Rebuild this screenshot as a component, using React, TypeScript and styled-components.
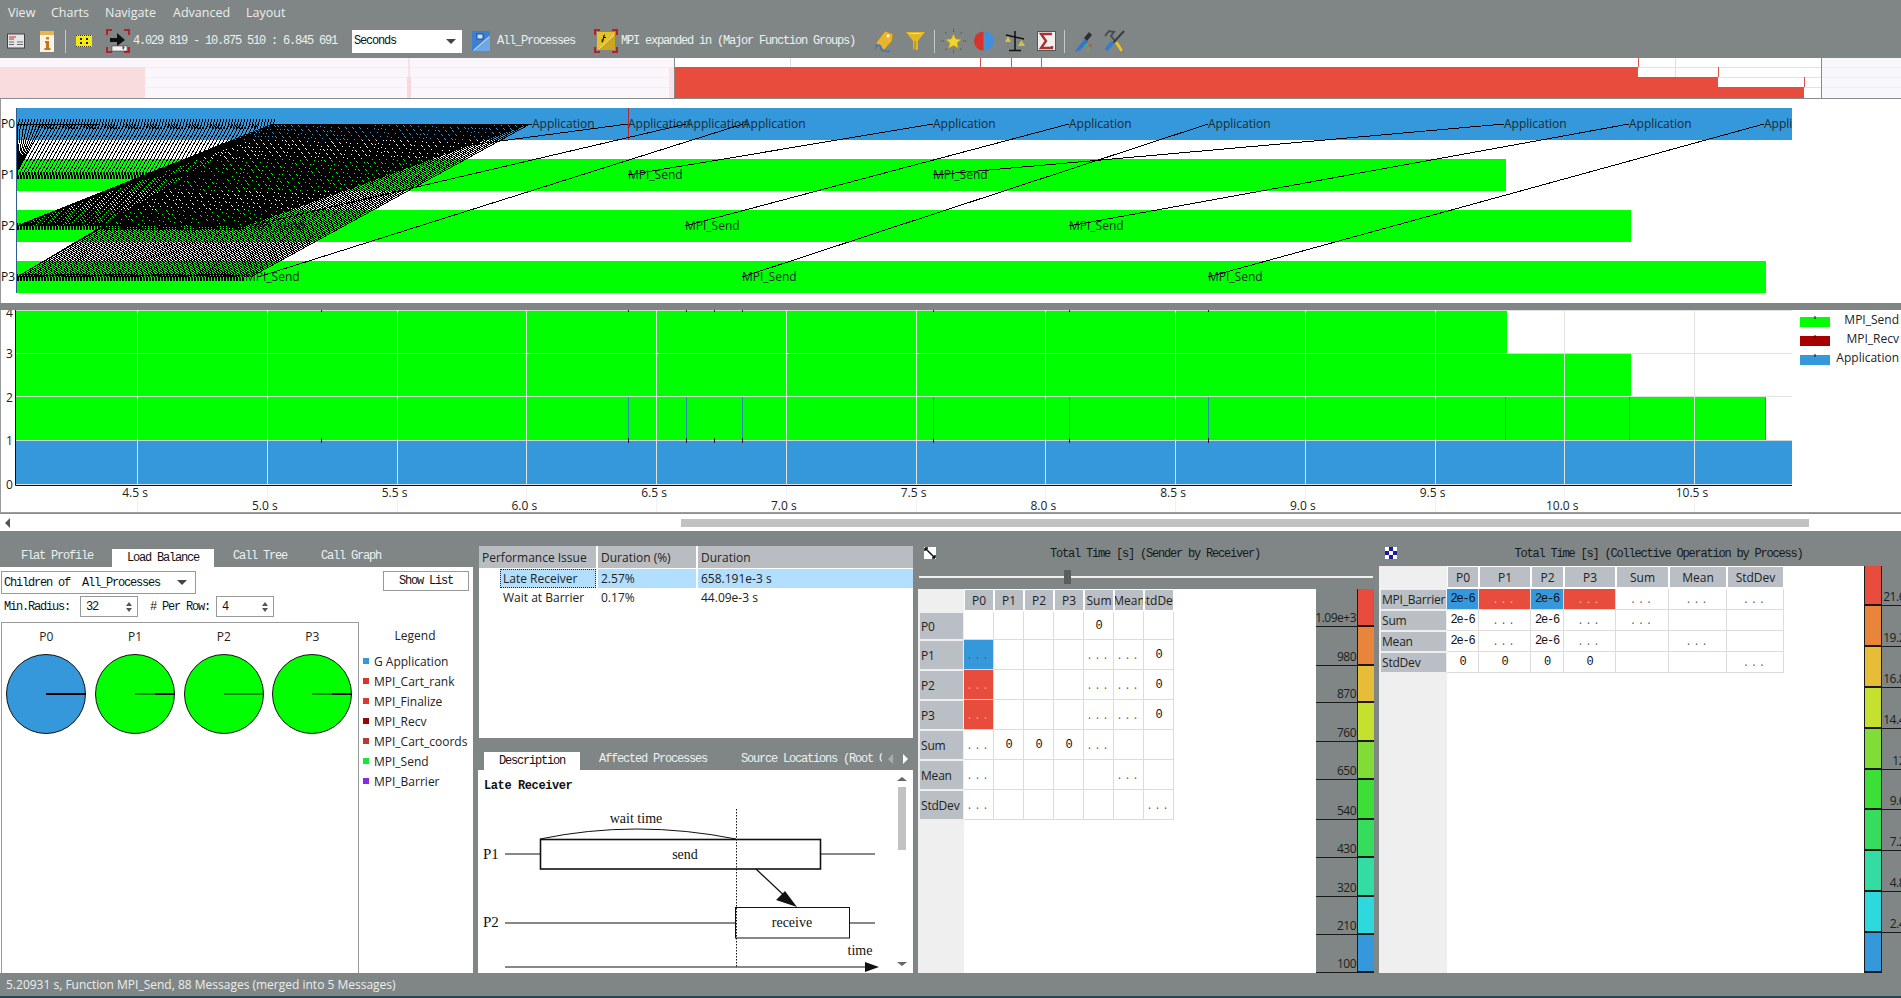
import React from "react";
import styled, { createGlobalStyle } from "styled-components";

const GRAY = "#808685";
const SANS = `"Open Sans", "Noto Sans", sans-serif`;
const MONO = `"Liberation Mono", "DejaVu Sans Mono", monospace`;
const BLUE = "#3498db";
const RED = "#e74c3c";
const GREEN = "#00ff00";

const Global = createGlobalStyle`
  html, body { margin: 0; padding: 0; background: ${GRAY}; }
  * { box-sizing: border-box; }
`;

const Page = styled.div`
  width: 1901px; height: 998px; overflow: hidden; background: ${GRAY};
  display: flex; flex-direction: column; font-family: ${SANS}; font-size: 12px; color: #222;
`;

const MenuBar = styled.div`
  height: 24px; display: flex; align-items: center; padding: 0 0 0 8px; color: #eceeee; font-size: 12.5px;
`;
const MenuItem = styled.span<{ $w: number }>`
  width: ${(p) => p.$w}px;
`;

const ToolBar = styled.div`
  height: 34px; display: flex; align-items: center;
`;
const Slot = styled.span<{ $ml: number; $w: number }>`
  display: flex; flex: none; margin-left: ${(p) => p.$ml}px; width: ${(p) => p.$w}px; height: 24px; align-items: center;
`;
const ToolSep = styled.span<{ $ml: number }>`
  flex: none; width: 1px; height: 23px; margin-left: ${(p) => p.$ml}px; background: #c4c8c8;
`;
const ToolText = styled.span<{ $ml: number }>`
  flex: none; margin-left: ${(p) => p.$ml}px; font: 12px ${MONO}; letter-spacing: -1.2px; color: #eef0f0; white-space: pre;
`;
const Combo = styled.div`
  flex: none; margin-left: 15px; width: 110px; height: 23px; background: #fff; color: #111;
  display: flex; align-items: center; justify-content: space-between; padding: 0 6px 0 2px;
  font: 12px ${MONO}; letter-spacing: -1.2px;
`;
const Caret = styled.span`
  width: 0; height: 0; border-left: 5px solid transparent; border-right: 5px solid transparent; border-top: 5px solid #444;
`;

const Strip = styled.svg<{ $h: number }>`
  display: block; flex: none; width: 1901px; height: ${(p) => p.$h}px; background: #fff;
`;
const Splitter = styled.div`
  flex: none; height: 7px; background: ${GRAY};
`;
const HScroll = styled.div`
  flex: none; height: 18px; background: #fff; display: flex; align-items: center; padding-left: 5px; border-top: 1px solid #8b8f8f;
`;
const ArrowLeft = styled.span`
  width: 0; height: 0; border-top: 5px solid transparent; border-bottom: 5px solid transparent; border-right: 5px solid #555;
`;
const HThumb = styled.span`
  margin-left: 671px; width: 1128px; height: 8px; background: #c2c2c2;
`;

const Bottom = styled.div`
  flex: none; height: 427px; margin-top: 15px; display: flex;
`;
const LeftPane = styled.div`
  flex: none; width: 473px; padding-top: 3px; display: flex; flex-direction: column;
`;
const TabRow = styled.div<{ $pl: number }>`
  flex: none; height: 18px; display: flex; padding-left: ${(p) => p.$pl}px; position: relative;
`;
const Tab = styled.div<{ $active?: boolean; $w: number; $pl: number }>`
  flex: none; width: ${(p) => p.$w}px; padding-left: ${(p) => p.$pl}px; height: 18px; overflow: hidden; white-space: pre;
  font: 12px/${(p) => (p.$active ? 19 : 15)}px ${MONO}; letter-spacing: -1.2px;
  background: ${(p) => (p.$active ? "#fff" : "transparent")};
  color: ${(p) => (p.$active ? "#111" : "#eef0f0")};
`;
const LeftBody = styled.div`
  flex: 1; background: #fff; display: flex; flex-direction: column; min-height: 0;
`;
const SelectRow = styled.div`
  display: flex; justify-content: space-between; align-items: flex-start; padding: 4px 4px 0 1px; height: 29px;
`;
const Select = styled.div`
  width: 195px; height: 23px; border: 1px solid #999; display: flex; align-items: center; justify-content: space-between;
  padding: 0 8px 0 2px; font: 12px ${MONO}; letter-spacing: -1.2px; white-space: pre; color: #111;
`;
const Button = styled.div`
  width: 86px; height: 20px; border: 1px solid #999; display: flex; align-items: center; justify-content: center;
  font: 12px ${MONO}; letter-spacing: -1.2px; white-space: pre; color: #111;
`;
const SpinRow = styled.div`
  height: 21px; display: flex; align-items: center; padding-left: 4px; font: 12px ${MONO}; letter-spacing: -1.2px; color: #111;
`;
const SpinLabel = styled.span<{ $w: number }>`
  width: ${(p) => p.$w}px; white-space: pre;
`;
const Spin = styled.div`
  width: 58px; height: 21px; border: 1px solid #999; display: flex; align-items: center; justify-content: space-between; padding: 0 5px;
`;
const SpinArrows = styled.span`
  display: flex; flex-direction: column; gap: 2px;
`;
const Tri = styled.span<{ $down?: boolean }>`
  display: block; width: 0; height: 0; border-left: 3.5px solid transparent; border-right: 3.5px solid transparent;
  ${(p) => (p.$down ? "border-top: 4px solid #555;" : "border-bottom: 4px solid #555;")}
`;
const RailTri = styled.span<{ $down?: boolean }>`
  display: block; width: 0; height: 0; border-left: 5px solid transparent; border-right: 5px solid transparent;
  ${(p) => (p.$down ? "border-top: 4px solid #666;" : "border-bottom: 4px solid #666;")}
`;
const PieRow = styled.div`
  flex: 1; margin-top: 5px; display: flex; min-height: 0;
`;
const PieBox = styled.div`
  margin-left: 1px; width: 358px; border: 1px solid #999; border-bottom: none; display: flex; align-items: flex-start; padding-left: 0;
`;
const PieCol = styled.div`
  width: 88.7px; display: flex; flex-direction: column; align-items: center;
`;
const PieLabel = styled.div`
  height: 16px; margin-top: 6px; line-height: 16px; font-size: 12px;
`;
const PieSvg = styled.svg`
  margin-top: 8px; width: 82px; height: 82px; display: block;
`;
const Legend = styled.div`
  flex: 1; padding: 5px 0 0 4px; display: flex; flex-direction: column;
`;
const LegendTitle = styled.div`
  text-align: center; height: 24px; line-height: 18px; padding-right: 6px; font-size: 12px; margin-bottom: 0;
`;
const LegendItem = styled.div`
  height: 20px; display: flex; align-items: center; gap: 5px; font-size: 12px; white-space: nowrap;
`;
const LegendDot = styled.span<{ $c: string }>`
  width: 6px; height: 6px; background: ${(p) => p.$c};
`;

const MidPane = styled.div`
  flex: none; width: 435px; margin-left: 5px; display: flex; flex-direction: column;
`;
const IssueTable = styled.div`
  flex: none; height: 192px; margin-left: 1px; background: #fff; display: grid;
  grid-template-columns: 117px 2px 98px 2px 215px; grid-auto-rows: min-content; align-content: start;
`;
const IssueHead = styled.div`
  height: 22px; background: #b9bdc1; padding: 0 3px; line-height: 23px; margin-bottom: 1px;
`;
const Gut = styled.div<{ $h: number; $mb?: number }>`
  height: ${(p) => p.$h}px; margin-bottom: ${(p) => p.$mb ?? 0}px;
`;
const IssueName = styled.div`
  height: 19px; padding-left: 21px; display: flex;
`;
const Focus = styled.span<{ $on?: boolean }>`
  flex: 1; padding-left: 3px; line-height: 20px;
  ${(p) => p.$on && "background:#b3dfff; outline:1px dotted #223; outline-offset:-1px;"}
`;
const IssueCell = styled.div<{ $on?: boolean }>`
  height: 19px; line-height: 20px; padding-left: 3px; ${(p) => p.$on && "background:#b3dfff;"}
`;
const MidTabs = styled.div`
  flex: none; margin-top: 14px; height: 18px; display: flex; padding-left: 6px; position: relative;
`;
const TabArrows = styled.div`
  flex: none; width: 34px; display: flex; align-items: center; gap: 10px; padding: 0 0 4px 6px;
`;
const ArrowSmall = styled.span<{ $faded?: boolean; $right?: boolean }>`
  width: 0; height: 0; border-top: 5px solid transparent; border-bottom: 5px solid transparent;
  ${(p) => (p.$right ? "border-left: 5px solid #fff;" : `border-right: 5px solid ${p.$faded ? "#a8acac" : "#fff"};`)}
`;
const DescBody = styled.div`
  flex: none; height: 203px; background: #fff; display: flex; overflow: hidden;
`;
const DescContent = styled.div`
  width: 416px; flex: none; display: flex; flex-direction: column;
`;
const DescTitle = styled.div`
  height: 20px; padding: 9px 0 0 6px; font: bold 12px/14px ${MONO}; letter-spacing: -0.4px; color: #111; flex: none; white-space: pre;
`;
const DescSvg = styled.svg`
  width: 416px; height: 183px; display: block; flex: none;
`;
const Rail = styled.div`
  width: 16px; display: flex; flex-direction: column; align-items: center; padding: 7px 0 7px;
`;
const RailThumb = styled.div`
  width: 8px; height: 63px; background: #c2c2c2; margin-top: 6px;
`;
const RailDown = styled.div`
  margin-top: auto;
`;

const MatrixPane = styled.div<{ $w: number }>`
  flex: none; width: ${(p) => p.$w}px; margin-left: 5px; display: flex; flex-direction: column;
`;
const MatrixTitle = styled.div<{ $pl: number }>`
  flex: none; height: 20px; display: flex; padding: 1px 0 0 6px;
  > div { flex: 1; padding-left: ${(p) => p.$pl}px; text-align: center; font: 12px/14px ${MONO}; letter-spacing: -1.2px; color: #15191a; white-space: pre; }
`;
const SliderWrap = styled.div`
  flex: none; height: 23px; position: relative; padding: 10px 1px 0;
`;
const Track = styled.div`
  height: 2px; background: #f0f0f0;
`;
const Thumb = styled.div`
  position: absolute; left: 146px; top: 4px; width: 7px; height: 14px; background: #5a5e5f;
`;
const MatrixBody = styled.div`
  flex: 1; display: flex; min-height: 0; overflow: hidden;
`;
const Table = styled.div<{ $w: number; $hw: number; $cols: string; $rows: string }>`
  flex: none; width: ${(p) => p.$w}px; background: linear-gradient(to right, #efefef ${(p) => p.$hw}px, #fff ${(p) => p.$hw}px);
  display: grid; grid-template-columns: ${(p) => p.$cols}; grid-template-rows: ${(p) => p.$rows}; align-content: start; padding-top: 1px;
`;
const Corner = styled.div``;
const ColHead = styled.div`
  background: #b9bfc4; margin: 0 1px 2px; display: flex; justify-content: center; align-items: center; overflow: hidden; white-space: nowrap;
`;
const RowHead = styled.div`
  background: #b9bfc4; margin: 1px 1px 1px 2px; display: flex; align-items: center; padding-left: 1px; letter-spacing: -0.2px; white-space: nowrap; overflow: hidden;
`;
const Cell = styled.div<{ $bg?: string }>`
  background: ${(p) => p.$bg ?? "#fff"}; border-right: 1px solid #dcdcdc; border-bottom: 1px solid #dcdcdc;
  display: flex; align-items: center; justify-content: center; font: 12px ${MONO}; letter-spacing: -1.2px; color: ${(p) => (p.$bg === RED ? "#c44" : "#111")};
`;
const Dots = styled.span<{ $light?: boolean }>`
  font: 10px ${MONO}; letter-spacing: 2px; color: ${(p) => (p.$light ? "#f2c0b8" : "#555")}; padding-top: 3px;
`;
const Scale = styled.div`
  flex: none; display: flex; flex-direction: column; overflow: hidden;
`;
const ScaleRow = styled.div<{ $h: number; $cols: string }>`
  flex: none; height: ${(p) => p.$h}px; display: grid; grid-template-columns: ${(p) => p.$cols};
`;
const ScaleText = styled.div<{ $line: boolean }>`
  display: flex; align-items: flex-end; justify-content: flex-end; padding: 0 1px 0 0; line-height: 16px; font-size: 12px; letter-spacing: -0.5px; color: #1b1f20;
  white-space: nowrap; ${(p) => p.$line && "border-bottom: 1px solid #1a1a1a;"}
`;
const Swatch = styled.div<{ $c: string }>`
  background: ${(p) => p.$c}; border: 1px solid #1a1a1a; border-width: 0 1px 2px 1px;
`;

const StatusBar = styled.div`
  flex: 1; padding: 0 0 0 6px; display: flex; align-items: center; color: #eceeee; font-size: 12px; border-bottom: 2px solid #24475c;
`;

/* ---------- icons ---------- */
const I = styled.svg<{ $w: number; $h: number }>`
  display: block; width: ${(p) => p.$w}px; height: ${(p) => p.$h}px;
`;
const Brackets = ({ w = 24 }: { w?: number }) => (
  <path d={`M1 6V1H6M${w - 6} 1H${w - 1}V6M1 ${w - 6}V${w - 1}H6M${w - 6} ${w - 1}H${w - 1}V${w - 6}`} fill="none" stroke="#b3202c" strokeWidth="2" />
);
const IconDoc = () => (
  <I $w={18} $h={24} viewBox="0 0 18 24">
    <rect x="0.5" y="5" width="17" height="14" fill="#e6e6e6" stroke="#444" />
    <path d="M2 8h7M2 10h5" stroke="#b33" />
    <path d="M2 13h5M10 13h6M2 15.500h5M10 15.500h6" stroke="#667" />
  </I>
);
const IconInfo = () => (
  <I $w={16} $h={24} viewBox="0 0 16 24">
    <rect x="1" y="2" width="14" height="21" fill="#f8f4e8" />
    <rect x="1" y="2" width="14" height="4" fill="#eab64c" />
    <rect x="7" y="8" width="3" height="2.500" fill="#e07a18" />
    <path d="M6 12h4v7h1.500v2h-6v-2H7v-5H6z" fill="#c9701a" />
  </I>
);
const IconRuler = () => (
  <I $w={16} $h={24} viewBox="0 0 16 24">
    <rect x="0" y="6" width="16" height="12" fill="#f5e90f" />
    <path d="M0 6.500h16M0 17.500h16" stroke="#333" strokeDasharray="1 1" />
    <path d="M5 9v2M11 9v2M5 13v2M11 13v2" stroke="#222" strokeWidth="2" />
  </I>
);
const IconZoom = () => (
  <I $w={24} $h={24} viewBox="0 0 24 24">
    <Brackets />
    <path d="M4 9h7V4l8 7-8 6v-4H4z" fill="#111" />
    <rect x="6" y="17" width="15" height="5" fill="#f2f2f2" stroke="#333" strokeWidth=".5" />
    <path d="M16 18h2v1h-1v1h1" stroke="#222" fill="none" strokeWidth=".8" />
  </I>
);
const IconProc = () => (
  <I $w={18} $h={24} viewBox="0 0 18 24">
    <rect x="0" y="2" width="18" height="20" fill="#3d7fd0" />
    <path d="M0 22L18 6v16z" fill="#6fa7e6" />
    <path d="M2 21L17 8" stroke="#d8e4f2" strokeWidth="1" />
    <rect x="5" y="5" width="6" height="5" fill="#cfe0f5" stroke="#1c4f96" />
  </I>
);
const IconFunc = () => (
  <I $w={24} $h={24} viewBox="0 0 24 24">
    <rect x="3" y="3" width="18" height="18" fill="#e1c22a" />
    <path d="M3 21L21 5v16z" fill="#cca61c" />
    <path d="M5 20L20 6" stroke="#f4e9a0" />
    <path d="M11 6c-2 0-1 3-2 5H7.500M9 8.500h3M9 11c0 2-1 2-1.500 2" stroke="#111" fill="none" strokeWidth="1.200" />
    <Brackets />
  </I>
);
const IconTag = () => (
  <I $w={18} $h={24} viewBox="0 0 18 24">
    <path d="M1 14L10 2l8 3-1 7-8 9z" fill="#eab52e" stroke="#a8791a" strokeWidth=".6" />
    <circle cx="13" cy="7" r="1.400" fill="#fff" />
    <path d="M0 21c0-6 6-6 6-2 0 3 4 4 9 3" fill="none" stroke="#3f7bb8" strokeWidth="1.800" />
  </I>
);
const IconFunnel = () => (
  <I $w={19} $h={24} viewBox="0 0 19 24">
    <path d="M0 3h19l-7 9v9l-5-1v-8z" fill="#e4b820" />
    <path d="M2 4h15l-4 1H5z" fill="#f8e58a" />
    <path d="M8 12v8l2-0v-8z" fill="#c8981a" />
  </I>
);
const IconStar = () => (
  <I $w={25} $h={24} viewBox="0 0 25 24">
    <path d="M12.500 5l2.300 4.900 5.400.5-4 3.600 1.200 5.300-4.900-2.700-4.900 2.700 1.200-5.300-4-3.600 5.400-.5z" fill="#f2d52c" stroke="#b8971a" strokeWidth=".6" />
    <path d="M12.500 0v3M4 3l2 2M21 3l-2 2M0 12h3M22 12h3M4 21l2-2M21 21l-2-2M12.500 21v3" stroke="#45484a" strokeDasharray="1 1" />
  </I>
);
const IconHalf = () => (
  <I $w={20} $h={24} viewBox="0 0 20 24">
    <path d="M9.500 2.500a9.500 9.500 0 0 0 0 19z" fill="#d5332b" />
    <path d="M10.500 2.500a9.500 9.500 0 0 1 0 19z" fill="#3f8fe0" />
  </I>
);
const IconBalance = () => (
  <I $w={20} $h={24} viewBox="0 0 20 24">
    <path d="M10 2v19M4 21.500h12M1 6l18 4" stroke="#111" strokeWidth="1.500" fill="none" />
    <path d="M0 13h6L3 7zM13 17h7l-3.500-6z" fill="#d6c04a" />
  </I>
);
const IconSigma = () => (
  <I $w={19} $h={24} viewBox="0 0 19 24">
    <rect x="0.500" y="2.500" width="18" height="19" fill="#f2f0ee" stroke="#555" />
    <path d="M15 5H4l5 7-5 7h11v-2" fill="none" stroke="#a83232" strokeWidth="2.400" />
  </I>
);
const IconDropper = () => (
  <I $w={20} $h={24} viewBox="0 0 20 24">
    <path d="M1 23l3-5 7-8 3 3-8 8z" fill="#2f78cf" />
    <path d="M10 9l5-6 3 3-5 6z" fill="#2b2f33" />
    <rect x="11" y="15" width="3" height="3" fill="#4cae60" />
    <rect x="15" y="15" width="3" height="3" fill="#c05a4a" />
    <rect x="13" y="19" width="3" height="3" fill="#6fa060" />
  </I>
);
const IconTools = () => (
  <I $w={22} $h={24} viewBox="0 0 22 24">
    <path d="M2 7l4-5 5 1-3 4 12 15" fill="none" stroke="#4a4e52" strokeWidth="2" />
    <path d="M13 13l6 9" stroke="#e4c72a" strokeWidth="3" />
    <path d="M21 2L10 14" stroke="#3a3e42" strokeWidth="2" />
    <path d="M10 13L3 21" stroke="#2f7ed0" strokeWidth="4" />
  </I>
);

/* ---------- data ---------- */
const X = (t: number) => 137 + (t - 4.5) * 259.5;
const ticks = [4.5, 5, 5.5, 6, 6.5, 7, 7.5, 8, 8.5, 9, 9.5, 10, 10.5];
const ROW = { p0: [108, 124], p1: [159, 175], p2: [210, 226], p3: [261, 277] } as const;
const appX = [532, 628, 686, 743, 933, 1069, 1208, 1504, 1629, 1764];
const sends: [number, number][] = [
  [628, 175], [933, 175], [250, 226], [685, 226], [1069, 226], [245, 277], [742, 277], [1208, 277],
];
const longMsgs = [
  [245, 175, 628], [250, 226, 686], [258, 277, 743], [628, 175, 933], [685, 226, 1069], [742, 277, 1208],
  [933, 175, 1504], [1069, 226, 1629], [1208, 277, 1764],
];
function bundle(): string {
  let d = "";
  for (let i = 0; i < 62; i++) {
    const s = 17 + i * 3.5;
    d += `M${s.toFixed(1)} 172L${(s + 27).toFixed(1)} 124`;
  }
  for (let i = 0; i < 8; i++) d += `M17 172L${17 + i * 3.4} 124`;
  for (let i = 0; i < 74; i++) {
    const s = 17 + Math.max(0, i - 6) * 3.4;
    d += `M${s.toFixed(1)} 226L${(273 + i * 3.5).toFixed(1)} 124`;
  }
  for (let i = 0; i < 76; i++) {
    const s = 17 + Math.max(0, i - 2) * 3.2;
    d += `M${s.toFixed(1)} 277L${(275 + i * 3.4).toFixed(1)} 124`;
  }
  return d;
}
function hatch(): string {
  let d = "";
  for (let x = 17; x < 275; x += 3) d += `M${x} 129L${x + 3} 119`;
  d += "M17 124H100M275 124H532";
  for (const [y, end] of [[175, 232], [226, 245], [277, 245]]) {
    for (let x = 17; x < end; x += 3) d += `M${x} ${y + 4}V${y - 3}L${x + 1.5} ${y + 2}L${x + 3} ${y - 3}`;
  }
  return d;
}

const legendItems: [string, string][] = [
  ["G Application", BLUE], ["MPI_Cart_rank", "#d6352b"], ["MPI_Finalize", "#d63b33"], ["MPI_Recv", "#8f0a0a"],
  ["MPI_Cart_coords", "#b83a33"], ["MPI_Send", "#15e63a"], ["MPI_Barrier", "#8a2be2"],
];
const pies = [
  { n: "P0", c: BLUE, thick: 40 },
  { n: "P1", c: GREEN, thick: 20 },
  { n: "P2", c: GREEN, thick: 0 },
  { n: "P3", c: GREEN, thick: 20 },
];
const SCALE_COLORS = ["#e74c3c", "#e8853b", "#e7bd38", "#c6e030", "#82dc38", "#3ede38", "#36dd5c", "#32dca2", "#2dd9dc", "#3498db"];
const scale1: [number, string][] = [[38, "1.09e+3"], [39, "980"], [37, "870"], [39, "760"], [38, "650"], [40, "540"], [38, "430"], [39, "320"], [38, "210"], [38, "100"]];
const scale2: [number, string][] = [[40, "21.6"], [41, "19.2"], [41, "16.8"], [41, "14.4"], [41, "12"], [40, "9.6"], [41, "7.2"], [41, "4.8"], [41, "2.4"], [40, ""]];

const M1_COLS = ["P0", "P1", "P2", "P3", "Sum", "Mean", "StdDev"];
const dd = "...";
const M1_ROWS: [string, string[]][] = [
  ["P0", ["", "", "", "", "0", "", ""]],
  ["P1", ["b", "", "", "", dd, dd, "0"]],
  ["P2", ["r", "", "", "", dd, dd, "0"]],
  ["P3", ["r", "", "", "", dd, dd, "0"]],
  ["Sum", [dd, "0", "0", "0", dd, "", ""]],
  ["Mean", [dd, "", "", "", "", dd, ""]],
  ["StdDev", [dd, "", "", "", "", "", dd]],
];
const M2_ROWS: [string, string[]][] = [
  ["MPI_Barrier", ["B2e-6", "r", "B2e-6", "r", dd, dd, dd]],
  ["Sum", ["2e-6", dd, "2e-6", dd, dd, "", ""]],
  ["Mean", ["2e-6", dd, "2e-6", dd, "", dd, ""]],
  ["StdDev", ["0", "0", "0", "0", "", "", dd]],
];

const MCell = ({ v }: { v: string }) => {
  if (v === "b") return <Cell $bg={BLUE}><Dots>{dd}</Dots></Cell>;
  if (v === "r") return <Cell $bg={RED}><Dots $light>{dd}</Dots></Cell>;
  if (v === dd) return <Cell><Dots>{dd}</Dots></Cell>;
  if (v.startsWith("B")) return <Cell $bg={BLUE}>{v.slice(1)}</Cell>;
  return <Cell>{v}</Cell>;
};

const ScaleBar = ({ rows, barFirst }: { rows: [number, string][]; barFirst?: boolean }) => (
  <Scale>
    {rows.map(([h, l], i) => (
      <ScaleRow key={i} $h={h} $cols={barFirst ? "18px 24px" : "41px 18px"}>
        {barFirst && <Swatch $c={SCALE_COLORS[i]} />}
        <ScaleText $line={i < rows.length - (barFirst ? 1 : 0)}>{l}</ScaleText>
        {!barFirst && <Swatch $c={SCALE_COLORS[i]} />}
      </ScaleRow>
    ))}
  </Scale>
);

const Overview = () => (
  <Strip $h={41} viewBox="0 58 1901 41">
    <rect x="0" y="58" width="674" height="41" fill="#fbf6fb" />
    <rect x="1821" y="58" width="80" height="41" fill="#f8f7fc" />
    <path d="M0 67.500H674M0 77.500H674M0 87.500H674M1822 67.500H1901M1822 77.500H1901M1822 87.500H1901" stroke="#f3eef4" />
    <path d="M675 67.500H1821M675 77.500H1821M675 87.500H1821" stroke="#e2e2e2" />
    <path d="M790.500 58V67M1675.500 58V77" stroke="#dedede" />
    <rect x="0" y="67" width="145" height="31" fill="#f8dcde" />
    <rect x="408" y="58" width="2" height="40" fill="#f7e3e6" />
    <rect x="407" y="77" width="4" height="21" fill="#f6d9dc" />
    <rect x="669" y="67" width="5" height="31" fill="#f9e4e7" />
    <path d="M675 98V67H1638V77H1718V87H1804V98z" fill={RED} />
    <path d="M980.500 58V67M1011.500 58V67M1041.500 58V67M1638.500 58V67M1718.500 67V77M1804.500 77V87" stroke="#d8524a" />
    <path d="M674.500 58V98M1821.500 58V98" stroke="#888" />
    <path d="M0 98.500H1901" stroke="#8a8d8d" />
  </Strip>
);

const Timeline = () => (
  <Strip $h={204} viewBox="0 99 1901 204">
    <path d="M0.500 99V303" stroke="#999" />
    <rect x="16" y="108" width="1776" height="32" fill={BLUE} />
    <rect x="16" y="159" width="1490" height="32" fill={GREEN} />
    <rect x="16" y="210" width="1615" height="32" fill={GREEN} />
    <rect x="16" y="261" width="1750" height="32" fill={GREEN} />
    <path d="M16.500 108V293" stroke="#2c5f8f" />
    <path d="M628.500 108V140" stroke="#b02a30" />
    <clipPath id="tlclip"><rect x="16" y="99" width="1776" height="204" /></clipPath>
    <g clipPath="url(#tlclip)" fontFamily={SANS} fontSize="12" fill="#1b2a33">
      {appX.map((x) => <text key={x} x={x} y={128}>Application</text>)}
      {sends.map(([x, y]) => <text key={x} x={x} y={y + 4}>MPI_Send</text>)}
    </g>
    <g fontFamily={SANS} fontSize="12" fill="#111">
      {Object.entries(ROW).map(([k, v]) => <text key={k} x="1" y={v[1] + 4}>{k.toUpperCase()}</text>)}
    </g>
    <g shapeRendering="crispEdges" fill="none" stroke="#000">
      <path d={bundle()} />
      <path d={hatch()} />
      {longMsgs.map(([a, y, b], i) => <line key={i} x1={a} y1={y} x2={b} y2={124} />)}
    </g>
  </Strip>
);

const Chart = () => (
  <Strip $h={203} viewBox="0 310 1901 203">
    <rect x="16" y="310" width="1491" height="43" fill={GREEN} />
    <rect x="16" y="353" width="1615" height="44" fill={GREEN} />
    <rect x="16" y="397" width="1750" height="43" fill={GREEN} />
    <rect x="16" y="440" width="1776" height="44" fill={BLUE} />
    <path d="M16 310.500H1792M16 353.500H1792M16 396.500H1792M16 440.500H1792M16 484.500H1792" stroke="#dedede" strokeOpacity=".9" />
    {ticks.map((t) => <path key={t} d={`M${Math.round(X(t)) + 0.5} 310V484`} stroke="#dfe4df" />)}
    {ticks.map((t) => <path key={t} d={`M${Math.round(X(t)) + 0.5} 486V513`} stroke="#f1f1f1" />)}
    {[628, 686, 742, 933, 1069, 1208, 1505, 1629, 1765].map((x) => <path key={x} d={`M${x}.5 397V440`} stroke="#2a8fb0" />)}
    {[321, 628, 686, 714, 742, 933, 1069, 1208].map((x) => <path key={x} d={`M${x}.5 310V312M${x}.5 438V443`} stroke="#222" />)}
    <path d="M15.500 310V485.500H1792" fill="none" stroke="#111" />
    <g fontFamily={SANS} fontSize="12" fill="#222">
      {[["4", 317], ["3", 358], ["2", 402], ["1", 445], ["0", 489]].map(([l, y]) => <text key={l} x="6" y={y}>{l}</text>)}
      {ticks.map((t, i) => (
        <text key={t} x={X(t) - 2} y={i % 2 ? 510 : 497} textAnchor="middle">{t.toFixed(1)} s</text>
      ))}
      <rect x="1800" y="317" width="30" height="10" fill={GREEN} />
      <rect x="1800" y="336" width="30" height="10" fill="#a80000" />
      <rect x="1800" y="355" width="30" height="10" fill={BLUE} />
      <path d="M1815 316v3M1815 335v3M1815 354v3" stroke="#111" />
      <text x="1899" y="324" textAnchor="end">MPI_Send</text>
      <text x="1899" y="343" textAnchor="end">MPI_Recv</text>
      <text x="1899" y="362" textAnchor="end">Application</text>
    </g>
    <path d="M0.500 310V513M0 512.500H1901" stroke="#9a9d9d" fill="none" />
  </Strip>
);

const Diagram = () => (
  <DescSvg viewBox="478 790 416 183">
    <g fontFamily={`"Liberation Serif", serif`} fontSize="14" fill="#111">
      <text x="483" y="859" fontSize="15">P1</text>
      <text x="483" y="927" fontSize="15">P2</text>
      <text x="636" y="823" textAnchor="middle">wait time</text>
      <text x="685" y="859" textAnchor="middle">send</text>
      <text x="792" y="927" textAnchor="middle">receive</text>
      <text x="860" y="955" textAnchor="middle">time</text>
    </g>
    <g fill="none" stroke="#111">
      <path d="M505 854H540M821 854H875M505 923H735M849 923H875" />
      <rect x="540.500" y="839.500" width="280" height="29.500" strokeWidth="1.600" />
      <rect x="735.500" y="907.500" width="114" height="30.500" />
      <path d="M540 839Q636 819 736 839" />
      <path d="M736.500 809V967" strokeDasharray="1.500 1.500" />
      <path d="M505 967H865" />
      <path d="M756 869L790 901" strokeWidth="1.300" />
    </g>
    <path d="M865 962L879 967L865 972zM776 900L797 907L785 891z" fill="#111" />
  </DescSvg>
);

export default function App() {
  return (
    <Page>
      <Global />
      <MenuBar>
        <MenuItem $w={43}>View</MenuItem>
        <MenuItem $w={54}>Charts</MenuItem>
        <MenuItem $w={68}>Navigate</MenuItem>
        <MenuItem $w={73}>Advanced</MenuItem>
        <MenuItem $w={50}>Layout</MenuItem>
      </MenuBar>
      <ToolBar>
        <Slot $ml={7} $w={18}><IconDoc /></Slot>
        <Slot $ml={14} $w={16}><IconInfo /></Slot>
        <ToolSep $ml={10} />
        <Slot $ml={10} $w={16}><IconRuler /></Slot>
        <Slot $ml={14} $w={24}><IconZoom /></Slot>
        <ToolText $ml={3}>4.029 819 - 10.875 510 : 6.845 691</ToolText>
        <Combo>Seconds<Caret /></Combo>
        <Slot $ml={10} $w={18}><IconProc /></Slot>
        <ToolText $ml={7}>All_Processes</ToolText>
        <Slot $ml={19} $w={24}><IconFunc /></Slot>
        <ToolText $ml={3}>MPI expanded in (Major Function Groups)</ToolText>
        <Slot $ml={20} $w={18}><IconTag /></Slot>
        <Slot $ml={13} $w={19}><IconFunnel /></Slot>
        <ToolSep $ml={9} />
        <Slot $ml={6} $w={25}><IconStar /></Slot>
        <Slot $ml={8} $w={20}><IconHalf /></Slot>
        <Slot $ml={11} $w={20}><IconBalance /></Slot>
        <Slot $ml={12} $w={19}><IconSigma /></Slot>
        <ToolSep $ml={8} />
        <Slot $ml={9} $w={20}><IconDropper /></Slot>
        <Slot $ml={9} $w={22}><IconTools /></Slot>
      </ToolBar>
      <Overview />
      <Timeline />
      <Splitter />
      <Chart />
      <HScroll><ArrowLeft /><HThumb /></HScroll>
      <Bottom>
        <LeftPane>
          <TabRow $pl={0}>
            <Tab $w={112} $pl={21}>Flat Profile</Tab>
            <Tab $active $w={102} $pl={15}>Load Balance</Tab>
            <Tab $w={88} $pl={19}>Call Tree</Tab>
            <Tab $w={100} $pl={19}>Call Graph</Tab>
          </TabRow>
          <LeftBody>
            <SelectRow>
              <Select>Children of  All_Processes<Caret /></Select>
              <Button>Show List</Button>
            </SelectRow>
            <SpinRow>
              <SpinLabel $w={76}>Min.Radius:</SpinLabel>
              <Spin>32<SpinArrows><Tri /><Tri $down /></SpinArrows></Spin>
              <SpinLabel $w={78}>  # Per Row:</SpinLabel>
              <Spin>4<SpinArrows><Tri /><Tri $down /></SpinArrows></Spin>
            </SpinRow>
            <PieRow>
              <PieBox>
                {pies.map((p) => (
                  <PieCol key={p.n}>
                    <PieLabel>{p.n}</PieLabel>
                    <PieSvg viewBox="0 0 82 82">
                      <circle cx="41" cy="41" r="39.500" fill={p.c} stroke="#111" />
                      <path d="M41 41H81" stroke="#111" />
                      {p.thick > 0 && <path d={`M${81 - p.thick} 41H81`} stroke="#000" strokeWidth="2" />}
                    </PieSvg>
                  </PieCol>
                ))}
              </PieBox>
              <Legend>
                <LegendTitle>Legend</LegendTitle>
                {legendItems.map(([n, c]) => (
                  <LegendItem key={n}><LegendDot $c={c} />{n}</LegendItem>
                ))}
              </Legend>
            </PieRow>
          </LeftBody>
        </LeftPane>
        <MidPane>
          <IssueTable>
            <IssueHead>Performance Issue</IssueHead><Gut $h={22} $mb={1} />
            <IssueHead>Duration (%)</IssueHead><Gut $h={22} $mb={1} />
            <IssueHead>Duration</IssueHead>
            <IssueName><Focus $on>Late Receiver</Focus></IssueName><Gut $h={19} />
            <IssueCell $on>2.57%</IssueCell><Gut $h={19} />
            <IssueCell $on>658.191e-3 s</IssueCell>
            <IssueName><Focus>Wait at Barrier</Focus></IssueName><Gut $h={19} />
            <IssueCell>0.17%</IssueCell><Gut $h={19} />
            <IssueCell>44.09e-3 s</IssueCell>
          </IssueTable>
          <MidTabs>
            <Tab $active $w={96} $pl={15}>Description</Tab>
            <Tab $w={142} $pl={19}>Affected Processes</Tab>
            <Tab $w={160} $pl={19}>Source Locations (Root Call)</Tab>
            <TabArrows><ArrowSmall $faded /><ArrowSmall $right /></TabArrows>
          </MidTabs>
          <DescBody>
            <DescContent>
              <DescTitle>Late Receiver</DescTitle>
              <Diagram />
            </DescContent>
            <Rail>
              <RailTri />
              <RailThumb />
              <RailDown><RailTri $down /></RailDown>
            </Rail>
          </DescBody>
        </MidPane>
        <MatrixPane $w={456}>
          <MatrixTitle $pl={0}>
            <svg width="12" height="12" viewBox="0 0 12 12"><rect width="12" height="12" fill="#fff" /><path d="M1 1L11 11M1 1h3M1 1v3M11 11H8M11 11V8" stroke="#111" strokeWidth="1.500" /></svg>
            <div>Total Time [s] (Sender by Receiver)</div>
          </MatrixTitle>
          <SliderWrap><Track /><Thumb /></SliderWrap>
          <MatrixBody>
            <Table $w={398} $hw={46} $cols="46px repeat(7, 30px)" $rows="22px 28px repeat(6, 30px)">
              <Corner />
              {M1_COLS.map((c) => <ColHead key={c}>{c}</ColHead>)}
              {M1_ROWS.map(([r, cells]) => (
                <React.Fragment key={r}>
                  <RowHead>{r}</RowHead>
                  {cells.map((v, i) => <MCell key={i} v={v} />)}
                </React.Fragment>
              ))}
            </Table>
            <ScaleBar rows={scale1} />
          </MatrixBody>
        </MatrixPane>
        <MatrixPane $w={527}>
          <MatrixTitle $pl={14}>
            <svg width="12" height="12" viewBox="0 0 12 12"><rect width="12" height="12" fill="#1a1aa8" /><path d="M0 0h4v4H0zM8 0h4v4H8zM4 4h4v4H4zM0 8h4v4H0zM8 8h4v4H8z" fill="#fff" /></svg>
            <div>Total Time [s] (Collective Operation by Process)</div>
          </MatrixTitle>
          <MatrixBody>
            <Table $w={485} $hw={68} $cols="68px 32px 52px 33px 52px 53px 58px 57px" $rows="22px repeat(4, 21px)">
              <Corner />
              {M1_COLS.map((c) => <ColHead key={c}>{c}</ColHead>)}
              {M2_ROWS.map(([r, cells]) => (
                <React.Fragment key={r}>
                  <RowHead>{r}</RowHead>
                  {cells.map((v, i) => <MCell key={i} v={v} />)}
                </React.Fragment>
              ))}
            </Table>
            <ScaleBar rows={scale2} barFirst />
          </MatrixBody>
        </MatrixPane>
      </Bottom>
      <StatusBar>5.20931 s, Function MPI_Send, 88 Messages (merged into 5 Messages)</StatusBar>
    </Page>
  );
}
